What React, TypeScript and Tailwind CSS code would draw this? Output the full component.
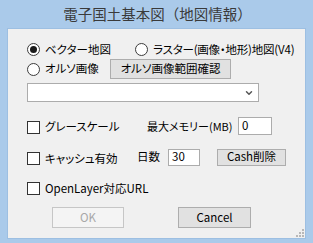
import { ChevronDown } from "lucide-react";

const font = "font-['Noto_Sans_CJK_JP',sans-serif] [font-feature-settings:'palt']";

const Radio = ({ checked }: { checked?: boolean }) => (
  <span className="w-[13px] h-[13px] rounded-full border border-[#3c3c3c] bg-white flex items-center justify-center shrink-0">
    {checked && <span className="w-[7px] h-[7px] rounded-full bg-[#1a1a1a]" />}
  </span>
);

const Check = () => <span className="w-[13px] h-[13px] border border-[#333] bg-white shrink-0" />;

const Btn = ({ label, w, h, disabled }: { label: string; w: string; h: string; disabled?: boolean }) => (
  <button
    className={
      disabled
        ? `${w} ${h} border border-[#c6c6c6] bg-[#f4f4f4] text-[#a8a8a8] flex items-center justify-center`
        : `${w} ${h} border border-[#adadad] bg-[#e1e1e1] text-black flex items-center justify-center`
    }
  >
    {label}
  </button>
);

export default function App() {
  return (
    <div className={`w-[313px] h-[243px] bg-[#aacaea] flex flex-col ${font} text-[11.5px] text-black leading-none`}>
      <div className="h-[28px] flex items-center justify-center text-[14.5px] text-[#3a3a3a] pl-[2px] [font-feature-settings:normal]">
        電子国土基本図（地図情報）
      </div>
      <div className="relative mx-[7px] h-[211px] border border-[#9dbfe2] bg-[#f0f0f0] flex flex-col pl-[19px]">
        <div className="mt-[14px] h-[13px] flex items-center">
          <div className="w-[108px] flex items-center gap-[5px]">
            <Radio checked />
            <span>ベクター地図</span>
          </div>
          <div className="flex items-center gap-[5px]">
            <Radio />
            <span className="tracking-[-0.2px]">ラスター(画像・地形)地図(V4)</span>
          </div>
        </div>

        <div className="mt-[3px] h-[20px] flex items-center">
          <div className="w-[83px] flex items-center gap-[5px]">
            <Radio />
            <span>オルソ画像</span>
          </div>
          <Btn label="オルソ画像範囲確認" w="w-[121px]" h="h-[20px]" />
        </div>

        <div className="mt-[4px] w-[232px] h-[19px] border border-[#acacac] bg-white flex items-center justify-end pr-[4px]">
          <ChevronDown className="w-[10px] h-[10px] text-[#555]" strokeWidth={3.5} />
        </div>

        <div className="mt-[15px] h-[18px] flex items-center">
          <div className="w-[120px] flex items-center gap-[5px] pt-[2px]">
            <Check />
            <span>グレースケール</span>
          </div>
          <span className="w-[91px] text-[11px]">最大メモリー(MB)</span>
          <div className="w-[34px] h-[18px] border border-[#acacac] bg-white flex items-center pl-[3px]">0</div>
        </div>

        <div className="mt-[13px] h-[18px] flex items-center">
          <div className="w-[110px] flex items-center gap-[5px] pt-[3px]">
            <Check />
            <span>キャッシュ有効</span>
          </div>
          <span className="w-[31px]">日数</span>
          <div className="w-[32px] h-[17px] border border-[#acacac] bg-white flex items-center pl-[3px]">30</div>
          <div className="ml-[17px]">
            <Btn label="Cash削除" w="w-[69px]" h="h-[17px]" />
          </div>
        </div>

        <div className="mt-[16px] h-[13px] flex items-center gap-[5px]">
          <Check />
          <span>OpenLayer対応URL</span>
        </div>

        <div className="mt-[12px] flex items-center pl-[25px] gap-[54px]">
          <Btn label="OK" w="w-[72px]" h="h-[21px]" disabled />
          <Btn label="Cancel" w="w-[73px]" h="h-[21px]" />
        </div>

        <svg className="absolute right-[1px] bottom-[1px]" width="10" height="10" viewBox="0 0 10 10">
          {[
            [8, 2], [5, 5], [8, 5], [2, 8], [5, 8], [8, 8],
          ].map(([x, y], i) => (
            <rect key={i} x={x} y={y} width="2" height="2" fill="#b8b8b8" />
          ))}
        </svg>
      </div>
    </div>
  );
}
